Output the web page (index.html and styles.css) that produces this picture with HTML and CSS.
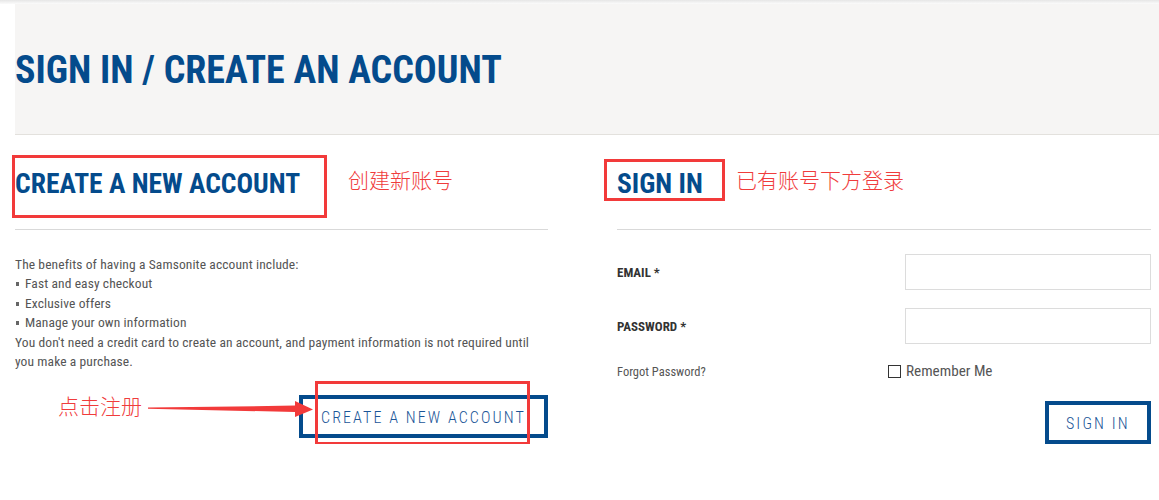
FILE: index.html
```html
<!DOCTYPE html>
<html lang="en">
<head>
<meta charset="utf-8">
<title>Sign In / Create an Account</title>
<link rel="stylesheet" href="styles.css">
</head>
<body>
<div class="topbar"></div>
<header class="page-head">
  <h1 class="page-title">SIGN IN / CREATE AN ACCOUNT</h1>
</header>
<main class="cols">
  <section class="col col-create">
    <div class="col-head">
      <h2 class="col-title">CREATE A NEW ACCOUNT</h2>
      <span class="mark mark-create-head"></span>
      <span class="note note-create">创建新账号</span>
    </div>
    <div class="copy">
      <p>The benefits of having a Samsonite account include:</p>
      <p><span class="bullet"></span>Fast and easy checkout</p>
      <p><span class="bullet"></span>Exclusive offers</p>
      <p><span class="bullet"></span>Manage your own information</p>
      <p class="wrap">You don't need a credit card to create an account, and payment information is not required until you make a purchase.</p>
    </div>
    <div class="actions">
      <span class="note note-click">点击注册</span>
      <svg class="arrow" width="166" height="18" viewBox="0 0 166 18"><polygon points="0,7.6 147,5.6 147,1 165,9.6 147,17 147,12 0,8.8" fill="#f23a3a"/></svg>
      <a class="btn btn-create" href="#">CREATE A NEW ACCOUNT</a>
      <span class="mark mark-create-btn"></span>
    </div>
  </section>
  <section class="col col-signin">
    <div class="col-head">
      <h2 class="col-title">SIGN IN</h2>
      <span class="mark mark-signin-head"></span>
      <span class="note note-signin">已有账号下方登录</span>
    </div>
    <form class="form">
      <div class="row">
        <label class="label" for="email">EMAIL *</label>
        <input class="field" id="email" type="text">
      </div>
      <div class="row">
        <label class="label" for="pw">PASSWORD *</label>
        <input class="field" id="pw" type="password">
      </div>
      <div class="row row-small">
        <a class="forgot" href="#">Forgot Password?</a>
        <label class="remember"><input class="check" type="checkbox">Remember Me</label>
      </div>
      <div class="actions actions-signin">
        <a class="btn btn-signin" href="#">SIGN IN</a>
      </div>
    </form>
  </section>
</main>
</body>
</html>
```
FILE: styles.css
```css
* { box-sizing: border-box; }
html, body { margin: 0; padding: 0; background: #fff; }
body {
  font-family: "Roboto", "Liberation Sans", sans-serif;
  font-stretch: condensed;
  color: #555;
  width: 1159px;
}
.topbar {
  height: 4px;
  background: linear-gradient(#e6e6e6, #fbfbfb);
}
.page-head {
  margin-left: 15px;
  height: 131px;
  background: #f6f5f4;
  border-bottom: 1px solid #e3e1dd;
  display: flex;
  align-items: center;
}
.page-title {
  margin: 0;
  padding-top: 2px;
  font-size: 38px;
  line-height: 1;
  font-weight: 700;
  color: #044b8c;
}
.cols {
  display: grid;
  grid-template-columns: 533px 534px;
  column-gap: 69px;
  padding-left: 15px;
}
.col-head {
  position: relative;
  height: 95px;
  padding-top: 35px;
  border-bottom: 1px solid #d9d9d9;
}
.col-title {
  margin: 0;
  font-size: 27.5px;
  line-height: 1;
  font-weight: 700;
  color: #044b8c;
}
.mark {
  position: absolute;
  border: 3px solid #f23a3a;
}
.mark-create-head { left: -3px; top: 20px; width: 315px; height: 63px; }
.mark-signin-head { left: -13px; top: 24px; width: 121px; height: 42px; }
.note {
  position: absolute;
  font-family: "Noto Sans CJK SC", sans-serif;
  font-stretch: normal;
  font-size: 21px;
  line-height: 24px;
  font-weight: 300;
  color: #f03c3c;
  white-space: nowrap;
}
.note-create { left: 333px; top: 32px; }
.note-signin { left: 119px; top: 32px; }
.copy {
  margin-top: 25px;
  width: 530px;
  font-size: 13.5px;
  letter-spacing: 0.1px;
  line-height: 19.4px;
  color: #555;
}
.copy p { margin: 0; }
.bullet {
  display: inline-block;
  width: 3px;
  height: 4px;
  background: #666;
  margin: 0 6px 1px 1px;
  vertical-align: middle;
}
.actions {
  position: relative;
  display: flex;
  justify-content: flex-end;
  margin-top: 24px;
}
.btn {
  display: inline-flex;
  align-items: center;
  height: 43px;
  border: 4px solid #044b8c;
  color: #1a5597;
  text-decoration: none;
  font-size: 16px;
  letter-spacing: 2.1px;
  font-weight: 300;
}
.btn-create { width: 249px; padding-left: 18px; padding-top: 1px; }
.btn-signin { width: 106px; padding-left: 17px; padding-top: 1px; }
.mark-create-btn { left: 300px; top: -14px; width: 215px; height: 64px; }
.note-click { left: 43px; top: -2px; }
.arrow { position: absolute; left: 133px; top: 5px; }
.form { margin-top: 24px; }
.row {
  display: grid;
  grid-template-columns: 271px 263px;
  align-items: center;
  margin-bottom: 18px;
}
.label {
  font-size: 13px;
  font-weight: 700;
  color: #333;
}
.field {
  margin: 0 0 0 17px;
  width: 246px;
  height: 36px;
  border: 1px solid #dcdcdc;
  background: #fff;
  outline: none;
}
.row-small { margin-top: -1px; margin-bottom: 0; height: 20px; }
.forgot {
  font-size: 12.5px;
  color: #555;
  text-decoration: none;
}
.remember {
  display: flex;
  align-items: center;
  font-size: 15.2px;
  color: #555;
}
.check {
  appearance: none;
  -webkit-appearance: none;
  margin: 0 5px 0 0;
  width: 13px;
  height: 13px;
  border: 1px solid #333;
  background: #fff;
}
.actions-signin { margin-top: 20px; }
```
